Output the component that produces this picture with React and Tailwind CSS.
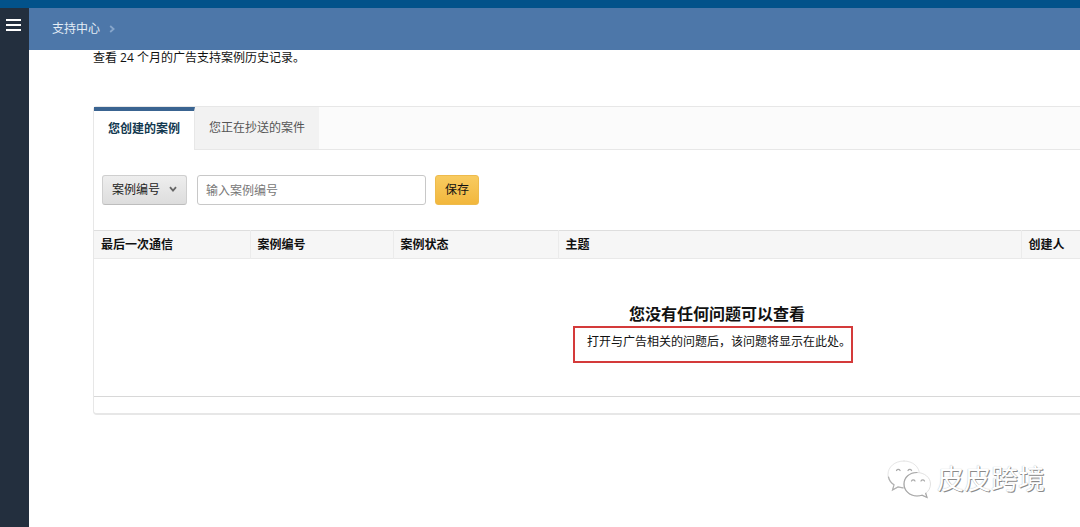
import { useState } from "react";

const columns = [
  { label: "最后一次通信", width: "w-[156px]" },
  { label: "案例编号", width: "w-[143px]" },
  { label: "案例状态", width: "w-[165px]" },
  { label: "主题", width: "w-[463px]" },
  { label: "创建人", width: "" },
];

const tabs = [
  { id: "created", label: "您创建的案例" },
  { id: "cc", label: "您正在抄送的案件" },
];

const Chevron = ({ className }) => (
  <svg viewBox="0 0 8 8" className={className} fill="none" stroke="currentColor" aria-hidden="true">
    <path d="M1 2.2 4 5.6 7 2.2" strokeWidth="1.8" />
  </svg>
);

const Watermark = () => (
  <div className="absolute bottom-[28px] right-[35px] flex items-center gap-[5px] pointer-events-none">
    <svg viewBox="0 0 46 40" className="w-[46px] h-[40px]" fill="#fff" strokeLinecap="round">
      <path
        d="M18 2C8.500 2 2 8 2 15.500c0 4.500 2.300 8 6 10.300L6.500 31l5.500-3c2 .6 4 .9 6 .9 9 0 15.500-5.900 15.500-13.400S27 2 18 2Z"
        stroke="#e6e6e6"
        strokeWidth="1"
      />
      <path d="M2.500 18c.7 3.200 2.700 5.900 5.500 7.800L6.500 31l5.500-3 5 .9" fill="none" stroke="#b0b0b0" strokeWidth="1.200" />
      <path d="M10.500 11.500a2 2 0 0 1 3.600 0M22 11.500a2 2 0 0 1 3.600 0" fill="none" stroke="#aaa" strokeWidth="1.200" />
      <path
        d="M31 13.500c-7.500 0-13 5-13 11.500s5.500 12 13 12c1.800 0 3.500-.3 5-.8l5 2.300-1.300-4.200c3-2.200 4.800-5.500 4.800-9.300 0-6.500-6-11.500-13.500-11.500Z"
        stroke="#e2e2e2"
        strokeWidth="1"
      />
      <path d="M31 13.500c-7.500 0-13 5-13 11.500s5.500 12 13 12c1.800 0 3.500-.3 5-.8l5 2.300-1.300-4.200" fill="none" stroke="#a8a8a8" strokeWidth="1.200" />
      <path d="M25.500 22a2 2 0 0 1 3.500 0M35 22a2 2 0 0 1 3.500 0" fill="none" stroke="#aaa" strokeWidth="1.200" />
    </svg>
    <span className="text-[27px] leading-[36px] text-white [text-shadow:1px_1px_0_#8a8a8a,0_0_1px_#aaa]">皮皮跨境</span>
  </div>
);

const App = () => {
  const [activeTab, setActiveTab] = useState("created");
  const [caseId, setCaseId] = useState("");

  return (
    <div className="relative min-h-screen flex flex-col overflow-hidden bg-white text-xs text-[#111] font-['Open_Sans','Noto_Sans_CJK_SC',sans-serif]">
      <div className="h-2 bg-[#02528a]" />

      <div className="flex flex-1">
        {/* Sidebar */}
        <aside className="w-[29px] shrink-0 bg-[#232f3e] pt-[10px]">
          <button aria-label="菜单" className="block ml-[6px] text-white">
            <svg viewBox="0 0 15 14" className="w-[15px] h-[14px]" stroke="currentColor" strokeWidth="2">
              <path d="M0 2h15M0 7h15M0 12h15" />
            </svg>
          </button>
        </aside>

        <div className="flex-1 min-w-0">
          <header className="h-[42px] flex items-center gap-2 pl-[23px] bg-[#4d77a9] text-[#e4edf6]">
            <a href="#support">支持中心</a>
            <Chevron className="w-2 h-2 -rotate-90 text-[#86a5ca]" />
          </header>

          <main className="pl-16 overflow-hidden">
            <p className="leading-4">查看 24 个月的广告支持案例历史记录。</p>

            <div className="mt-10 min-w-[1248px] border border-[#e7e7e7] border-b-2 rounded-sm">
              {/* Tabs */}
              <div role="tablist" className="flex h-[43px] bg-[#fbfbfb]">
                {tabs.map((tab) => (
                  <button
                    key={tab.id}
                    role="tab"
                    aria-selected={activeTab === tab.id}
                    onClick={() => setActiveTab(tab.id)}
                    className={
                      activeTab === tab.id
                        ? "px-[14px] pb-1 bg-white font-bold text-[#12384f] border-t-4 border-r border-t-[#3a6491] border-r-[#e7e7e7]"
                        : "px-[14px] bg-[#f2f2f2] text-[#555] border-b border-[#e7e7e7]"
                    }
                  >
                    {tab.label}
                  </button>
                ))}
                <div className="flex-1 border-b border-[#e7e7e7]" />
              </div>

              {/* Search */}
              <form className="flex items-center py-[25px] pl-2" onSubmit={(e) => e.preventDefault()}>
                <div className="relative">
                  <select
                    aria-label="搜索条件"
                    className="appearance-none block w-[85px] h-[30px] pl-[9px] rounded-[3px] border border-[#cfcfcf] border-b-[#bdbdbd] bg-linear-to-b from-[#eeeeee] to-[#dddddd] text-[#222]"
                  >
                    <option>案例编号</option>
                    <option>案例状态</option>
                    <option>主题</option>
                  </select>
                  <Chevron className="absolute right-[10px] top-[10px] w-2 h-2 text-[#666] pointer-events-none" />
                </div>
                <input
                  type="text"
                  aria-label="案例编号"
                  placeholder="输入案例编号"
                  value={caseId}
                  onChange={(e) => setCaseId(e.target.value)}
                  className="ml-[10px] w-[229px] h-[30px] px-2 rounded-[3px] border border-[#c8c8c8] bg-white placeholder:text-[#777]"
                />
                <button
                  type="submit"
                  className="ml-[9px] w-[44px] h-[30px] rounded-[3px] border border-[#eebb4c] bg-linear-to-b from-[#f8cb60] to-[#f2b73c]"
                >
                  保存
                </button>
              </form>

              <table className="w-full table-fixed border-collapse">
                <thead>
                  <tr className="h-7 bg-[#f6f6f6] border-y border-t-[#dedede] border-b-[#e9e9e9]">
                    {columns.map((col) => (
                      <th
                        key={col.label}
                        scope="col"
                        className={`${col.width} px-[7px] text-left font-bold border-r border-[#ebebeb] last:border-r-0`}
                      >
                        {col.label}
                      </th>
                    ))}
                  </tr>
                </thead>
                <tbody>
                  <tr className="border-b border-[#d8d8d8]">
                    <td colSpan={columns.length} className="h-[138px] pt-[43px] align-top text-center">
                      <h2 className="text-base leading-6 font-bold">您没有任何问题可以查看</h2>
                      <p className="inline-block h-[37px] mr-2 pl-3 leading-[28px] border-2 border-[#d43a3a]">
                        打开与广告相关的问题后，该问题将显示在此处。
                      </p>
                    </td>
                  </tr>
                </tbody>
              </table>
              <div className="h-4" />
            </div>
          </main>
        </div>
      </div>

      <Watermark />
    </div>
  );
};

export default App;
